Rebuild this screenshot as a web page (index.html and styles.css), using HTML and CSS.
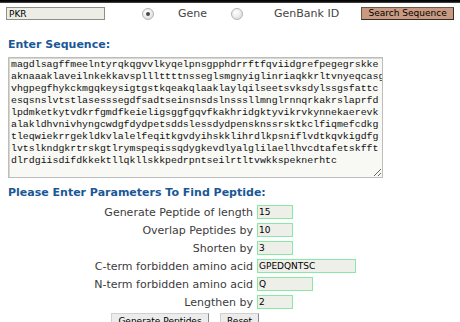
FILE: index.html
```html
<!DOCTYPE html>
<html>
<head>
<meta charset="utf-8">
<link rel="stylesheet" href="styles.css">
</head>
<body>
<div class="topbar"></div>
<form class="page">
  <div class="search">
    <input class="gene-input" type="text" value="PKR">
    <span class="radio radio-first checked"></span>
    <span class="opt opt-gene">Gene</span>
    <span class="radio radio-second"></span>
    <span class="opt opt-bank">GenBank ID</span>
    <button type="button" class="search-btn">Search Sequence</button>
  </div>
  <h2 class="heading heading-seq">Enter Sequence:</h2>
  <textarea class="seq" spellcheck="false">magdlsagffmeelntyrqkqgvvlkyqelpnsgpphdrrftfqviidgrefpegegrskke
aknaaaklaveilnkekkavsplllttttnsseglsmgnyiglinriaqkkrltvnyeqcasg
vhgpegfhykckmgqkeysigtgstkqeakqlaaklaylqilseetsvksdylssgsfattc
esqsnslvtstlasesssegdfsadtseinsnsdslnsssllmnglrnnqrkakrslaprfd
lpdmketkytvdkrfgmdfkeieligsggfgqvfkakhridgktyvikrvkynnekaerevk
alakldhvnivhyngcwdgfdydpetsddslessdydpensknssrsktkclfiqmefcdkg
tleqwiekrrgekldkvlalelfeqitkgvdyihskklihrdlkpsniflvdtkqvkigdfg
lvtslkndgkrtrskgtlrymspeqissqdygkevdlyalglilaellhvcdtafetskfft
dlrdgiisdifdkkektllqkllskkpedrpntseilrtltvwkkspeknerhtc</textarea>
  <h2 class="heading heading-params">Please Enter Parameters To Find Peptide:</h2>
  <div class="params">
    <div class="row"><label class="lbl">Generate Peptide of length</label><input class="field short" type="text" value="15"></div>
    <div class="row"><label class="lbl">Overlap Peptides by</label><input class="field short" type="text" value="10"></div>
    <div class="row"><label class="lbl">Shorten by</label><input class="field short" type="text" value="3"></div>
    <div class="row"><label class="lbl">C-term forbidden amino acid</label><input class="field long" type="text" value="GPEDQNTSC"></div>
    <div class="row"><label class="lbl">N-term forbidden amino acid</label><input class="field mid" type="text" value="Q"></div>
    <div class="row"><label class="lbl">Lengthen by</label><input class="field short" type="text" value="2"></div>
  </div>
  <div class="actions">
    <button type="button" class="btn">Generate Peptides</button>
    <button type="button" class="btn">Reset</button>
  </div>
</form>
</body>
</html>
```
FILE: styles.css
```css
html, body {
  margin: 0;
  padding: 0;
  background: #ffffff;
  overflow: hidden;
}
body {
  font-family: "DejaVu Sans", Verdana, sans-serif;
  font-size: 11px;
  color: #3c3c3c;
}
.topbar {
  height: 3px;
  background: linear-gradient(#000 0, #111 2px, #666 3px);
}
.page {
  margin: 0;
  padding: 0 0 0 8px;
}
.search {
  display: flex;
  align-items: center;
  height: 13px;
  margin-top: 4px;
  margin-left: -2px;
}
.gene-input {
  box-sizing: border-box;
  width: 99px;
  height: 13px;
  margin: 0;
  padding: 0 2px;
  border: 1px solid #8d8d8d;
  background: #ecede4;
  font-family: "DejaVu Sans", sans-serif;
  font-size: 9px;
  color: #000;
  outline: none;
}
.radio {
  box-sizing: border-box;
  display: inline-block;
  width: 12px;
  height: 12px;
  border-radius: 50%;
  border: 1px solid #b4b4b4;
  background: radial-gradient(circle at 40% 35%, #ffffff 0, #eeeeee 45%, #d2d2d2 100%);
  position: relative;
  flex: none;
}
.radio.checked::after {
  content: "";
  position: absolute;
  left: 3px;
  top: 3px;
  width: 4px;
  height: 4px;
  border-radius: 50%;
  background: #4a4a4a;
}
.radio-first { margin-left: 37px; }
.radio-second { margin-left: 24px; }
.opt {
  color: #444;
  font-size: 11px;
  line-height: 13px;
}
.opt-gene { margin-left: 24px; }
.opt-bank { margin-left: 31px; }
.search-btn {
  box-sizing: border-box;
  margin: 0 0 0 22px;
  height: 13px;
  width: 93px;
  padding: 0;
  border: 1px solid #2e2e2e;
  border-top-color: #6b5548;
  border-left-color: #6b5548;
  background: #c99a80;
  font-family: "DejaVu Sans", sans-serif;
  font-size: 9px;
  line-height: 11px;
  color: #000;
}
.heading {
  margin: 0;
  font-size: 11px;
  line-height: 13px;
  font-weight: bold;
  color: #1a5796;
}
.heading-seq { margin-top: 18px; }
.seq {
  display: block;
  box-sizing: border-box;
  margin: 6px 0 0 0;
  width: 375px;
  height: 121px;
  padding: 1px 2px;
  border: 1px solid #bdbdbd;
  box-shadow: inset 1px 1px 0 #d6d6d2;
  background: #f8f8f4;
  font-family: "Liberation Mono", "Courier New", monospace;
  font-size: 9.9px;
  line-height: 12px;
  color: #111;
  white-space: pre;
  overflow: hidden;
  outline: none;
}
.heading-params { margin-top: 8px; }
.params {
  margin-top: 4px;
  display: flex;
  flex-direction: column;
}
.row {
  display: flex;
  align-items: center;
  height: 18px;
}
.lbl {
  width: 245px;
  text-align: right;
  color: #3c3c3c;
  font-size: 11px;
  line-height: 13px;
}
.field {
  box-sizing: border-box;
  margin: 0 0 0 4px;
  height: 14px;
  padding: 0 1px;
  border: 1px solid #86eaa4;
  background: #efefe9;
  font-family: "DejaVu Sans", sans-serif;
  font-size: 9px;
  color: #000;
  outline: none;
}
.short { width: 36px; }
.mid { width: 56px; }
.long { width: 99px; }
.actions {
  display: flex;
  gap: 11px;
  margin: 2px 0 0 103px;
}
.btn {
  box-sizing: border-box;
  height: 16px;
  margin: 0;
  padding: 0 6px;
  border: 1px solid #8a8a8a;
  border-top-color: #d0d0d0;
  border-left-color: #d0d0d0;
  background: #ececec;
  font-family: "DejaVu Sans", sans-serif;
  font-size: 9px;
  line-height: 12px;
  color: #000;
}
.btn:first-child { width: 98px; }
```
